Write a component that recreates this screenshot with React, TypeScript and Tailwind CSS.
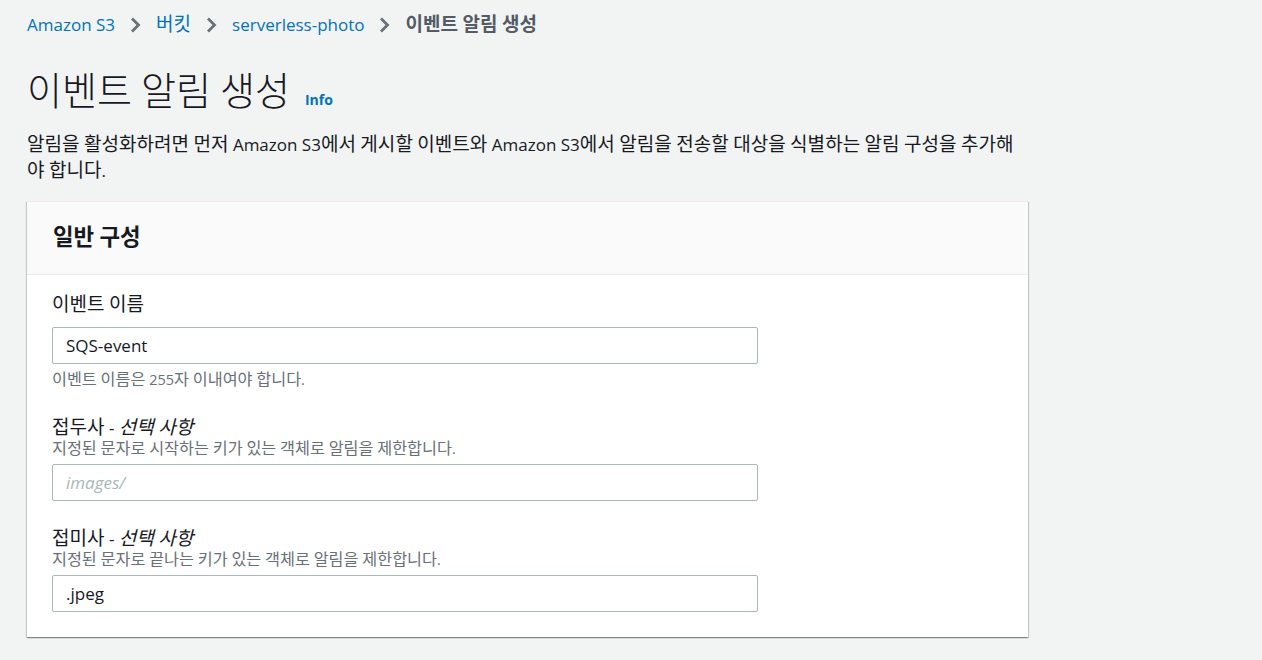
import React from 'react';

// Hangul runs are set a little larger so the glyph width matches the reference font
function ko(text: string) {
  return text.split(/([\uAC00-\uD7A3]+)/).map((part, i) =>
    /[\uAC00-\uD7A3]/.test(part) ? (
      <span key={i} className="text-[1.12em] leading-none">
        {part}
      </span>
    ) : (
      part
    )
  );
}

function Chevron() {
  return (
    <svg className="w-[11px] h-[16px] mx-[15px]" viewBox="0 0 11 16" fill="none" stroke="#687078" strokeWidth={2.8}>
      <path d="M2 1.5l6.5 6.5L2 14.5" />
    </svg>
  );
}

function Field({
  label,
  optional,
  desc,
  value,
  placeholder,
  hint,
  className = '',
}: {
  label: string;
  optional?: boolean;
  desc?: string;
  value?: string;
  placeholder?: string;
  hint?: string;
  className?: string;
}) {
  return (
    <div className={className}>
      <div className="text-[17px] leading-[22px] text-[#16191f]">
        {ko(label)}
        {optional && (
          <>
            {' - '}
            <i>{ko('선택 사항')}</i>
          </>
        )}
      </div>
      {desc && <div className="mt-[1px] text-[14.5px] leading-[18px] text-[#687078]">{ko(desc)}</div>}
      <div
        className={`w-[706px] h-[37px] border border-[#aab7b8] rounded-[2px] bg-white px-[13px] flex items-center text-[17px] ${
          desc ? 'mt-[6px]' : 'mt-[11px]'
        } ${value ? 'text-[#16191f]' : 'text-[#aab7b8] italic'}`}
      >
        {value || placeholder}
      </div>
      {hint && <div className="mt-[7px] text-[14.5px] leading-[18px] text-[#687078]">{ko(hint)}</div>}
    </div>
  );
}

export default function App() {
  return (
    <div
      className="min-h-[660px] bg-[#f2f3f3] pl-[27px] pt-[13px] text-[#16191f]"
      style={{ fontFamily: '"Open Sans", "Noto Sans CJK KR", sans-serif' }}
    >
      {/* breadcrumb */}
      <nav className="flex items-center text-[17px] leading-[24px]">
        <a className="text-[#0073bb]">Amazon S3</a>
        <Chevron />
        <a className="text-[#0073bb]">{ko('버킷')}</a>
        <Chevron />
        <a className="text-[#0073bb]">serverless-photo</a>
        <Chevron />
        <span className="text-[#545b64] font-bold">{ko('이벤트 알림 생성')}</span>
      </nav>

      {/* title */}
      <div className="mt-[34px] flex items-baseline gap-[15px]">
        <h1 className="text-[34px] leading-[42px] font-light">{ko('이벤트 알림 생성')}</h1>
        <a className="text-[14px] font-bold text-[#0073bb]">Info</a>
      </div>
      <p className="mt-[19px] w-[1000px] text-[17px] leading-[26px]">
        {ko(
          '알림을 활성화하려면 먼저 Amazon S3에서 게시할 이벤트와 Amazon S3에서 알림을 전송할 대상을 식별하는 알림 구성을 추가해야 합니다.'
        )}
      </p>

      {/* card */}
      <div className="mt-[17px] w-[1001px] bg-white border-t border-[#eaeded] shadow-[0_1px_1px_0_rgba(0,28,36,0.3),1px_1px_1px_0_rgba(0,28,36,0.15),-1px_1px_1px_0_rgba(0,28,36,0.15)]">
        <div className="h-[73px] bg-[#fafafa] border-b border-[#eaeded] px-[26px] flex items-center">
          <h2 className="text-[20px] leading-[28px] font-bold">{ko('일반 구성')}</h2>
        </div>
        <div className="px-[25px] pt-[19px] pb-[25px]">
          <Field label="이벤트 이름" value="SQS-event" hint="이벤트 이름은 255자 이내여야 합니다." />
          <Field
            className="mt-[28px]"
            label="접두사"
            optional
            desc="지정된 문자로 시작하는 키가 있는 객체로 알림을 제한합니다."
            placeholder="images/"
          />
          <Field
            className="mt-[27px]"
            label="접미사"
            optional
            desc="지정된 문자로 끝나는 키가 있는 객체로 알림을 제한합니다."
            value=".jpeg"
          />
        </div>
      </div>
    </div>
  );
}
